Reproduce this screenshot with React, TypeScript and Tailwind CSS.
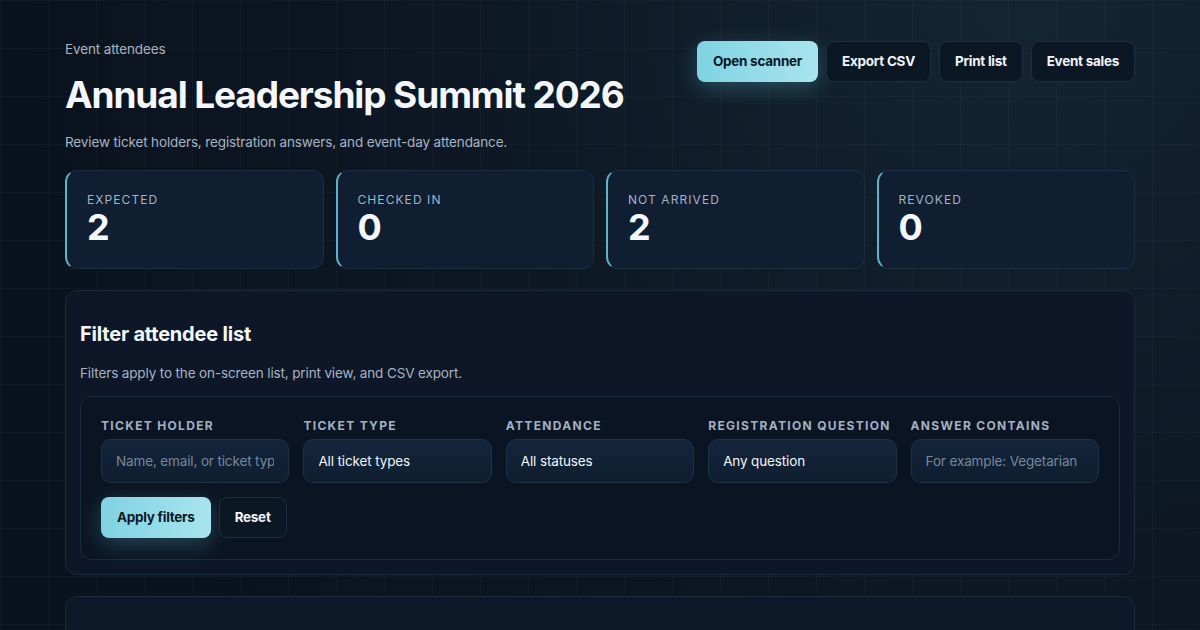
import React from "react";

const STATS = [
  { label: "Expected", value: "2" },
  { label: "Checked in", value: "0" },
  { label: "Not arrived", value: "2" },
  { label: "Revoked", value: "0" },
];

const FIELDS = [
  { label: "Ticket holder", placeholder: "Name, email, or ticket type", kind: "input" },
  { label: "Ticket type", value: "All ticket types", kind: "select" },
  { label: "Attendance", value: "All statuses", kind: "select" },
  { label: "Registration question", value: "Any question", kind: "select" },
  { label: "Answer contains", placeholder: "For example: Vegetarian", kind: "input" },
];

function GhostButton({ children }: { children: React.ReactNode }) {
  return (
    <button className="h-[41px] shrink-0 whitespace-nowrap rounded-lg border border-[#1f2f42] bg-[#0c1724] px-[15px] text-[13.5px] font-bold tracking-[-0.02em] text-[#f1f5f9]">
      {children}
    </button>
  );
}

function PrimaryButton({ children }: { children: React.ReactNode }) {
  return (
    <button className="h-[41px] shrink-0 whitespace-nowrap rounded-lg bg-gradient-to-r from-[#7fd3e2] to-[#a8e4ee] px-[16px] text-[13.5px] font-bold tracking-[-0.02em] text-[#0b1826] shadow-[0_6px_22px_rgba(103,200,222,0.28)]">
      {children}
    </button>
  );
}

export default function App() {
  return (
    <div
      className="min-h-[630px] w-full overflow-hidden bg-[#0a121d] bg-[linear-gradient(rgba(255,255,255,0.022)_1px,transparent_1px),linear-gradient(90deg,rgba(255,255,255,0.022)_1px,transparent_1px),radial-gradient(circle_at_85%_0%,#142532_0%,#0d1824_45%,#0a121d_80%)] bg-[size:48px_48px,48px_48px,100%_100%] font-['Inter','Noto_Sans',sans-serif] text-[#e8eef5]"
    >
      <div className="mx-auto w-[1070px] pt-[40px]">
        <header className="flex items-start justify-between">
          <div className="min-w-0">
            <p className="text-[13.5px] leading-[18px] tracking-[-0.01em] text-[#a7b3c2]">Event attendees</p>
            <h1 className="mt-[14px] whitespace-nowrap text-[37px] font-bold leading-[46px] tracking-[-0.03em] text-[#f4f7fb]">
              Annual Leadership Summit 2026
            </h1>
            <p className="mt-[14px] text-[13.5px] leading-[20px] tracking-[-0.01em] text-[#a7b3c2]">
              Review ticket holders, registration answers, and event-day attendance.
            </p>
          </div>
          <div className="mt-px flex shrink-0 gap-2">
            <PrimaryButton>Open scanner</PrimaryButton>
            <GhostButton>Export CSV</GhostButton>
            <GhostButton>Print list</GhostButton>
            <GhostButton>Event sales</GhostButton>
          </div>
        </header>

        <section className="mt-[18px] grid grid-cols-4 gap-3">
          {STATS.map((s) => (
            <div
              key={s.label}
              className="h-[99px] rounded-xl border border-[#1c2e42] border-l-2 border-l-[#5fb3c8] bg-[#0f1e31] px-[20px] pt-[22px]"
            >
              <p className="text-xs uppercase leading-[14px] tracking-[0.09em] text-[#a4b2c3]">{s.label}</p>
              <p className="mt-0 text-[36px] font-bold leading-[40px] text-[#f4f7fb]">{s.value}</p>
            </div>
          ))}
        </section>

        <section className="mt-[21px] rounded-xl border border-[#1b2a3c] bg-[#0d1727] px-[14px] pb-[14px] pt-[30px]">
          <h2 className="text-xl font-bold leading-[26px] tracking-[-0.01em] text-[#f4f7fb]">Filter attendee list</h2>
          <p className="mt-[16px] text-[13.5px] leading-[20px] tracking-[-0.01em] text-[#a7b3c2]">
            Filters apply to the on-screen list, print view, and CSV export.
          </p>
          <div className="mt-[13px] rounded-xl border border-[#1b2b3d] bg-[#0b1422] px-[20px] pb-[21px] pt-[21px]">
            <div className="grid grid-cols-5 gap-[14px]">
              {FIELDS.map((f) => (
                <label key={f.label} className="flex min-w-0 flex-col gap-[5px]">
                  <span className="whitespace-nowrap text-xs font-bold uppercase leading-[16px] tracking-[0.11em] text-[#a2b1c3]">
                    {f.label}
                  </span>
                  {f.kind === "input" ? (
                    <input
                      readOnly
                      placeholder={f.placeholder}
                      className="h-[44px] w-full rounded-[10px] border border-[#1f3145] bg-gradient-to-b from-[#13243a] to-[#0f1d2f] px-[14px] text-[13.5px] tracking-[-0.01em] text-[#e8eef5] outline-none placeholder:text-[#76889c]"
                    />
                  ) : (
                    <div className="flex h-[44px] items-center rounded-[10px] border border-[#1f3145] bg-gradient-to-b from-[#14263c] to-[#0f1d2f] px-[14px] text-[13.5px] tracking-[-0.01em] text-[#f1f5f9]">
                      {f.value}
                    </div>
                  )}
                </label>
              ))}
            </div>
            <div className="mt-[14px] flex gap-2">
              <PrimaryButton>Apply filters</PrimaryButton>
              <GhostButton>Reset</GhostButton>
            </div>
          </div>
        </section>

        <section className="mt-[21px] h-[120px] rounded-xl border border-[#1b2a3c] bg-[#0d1828]" />
      </div>
    </div>
  );
}
